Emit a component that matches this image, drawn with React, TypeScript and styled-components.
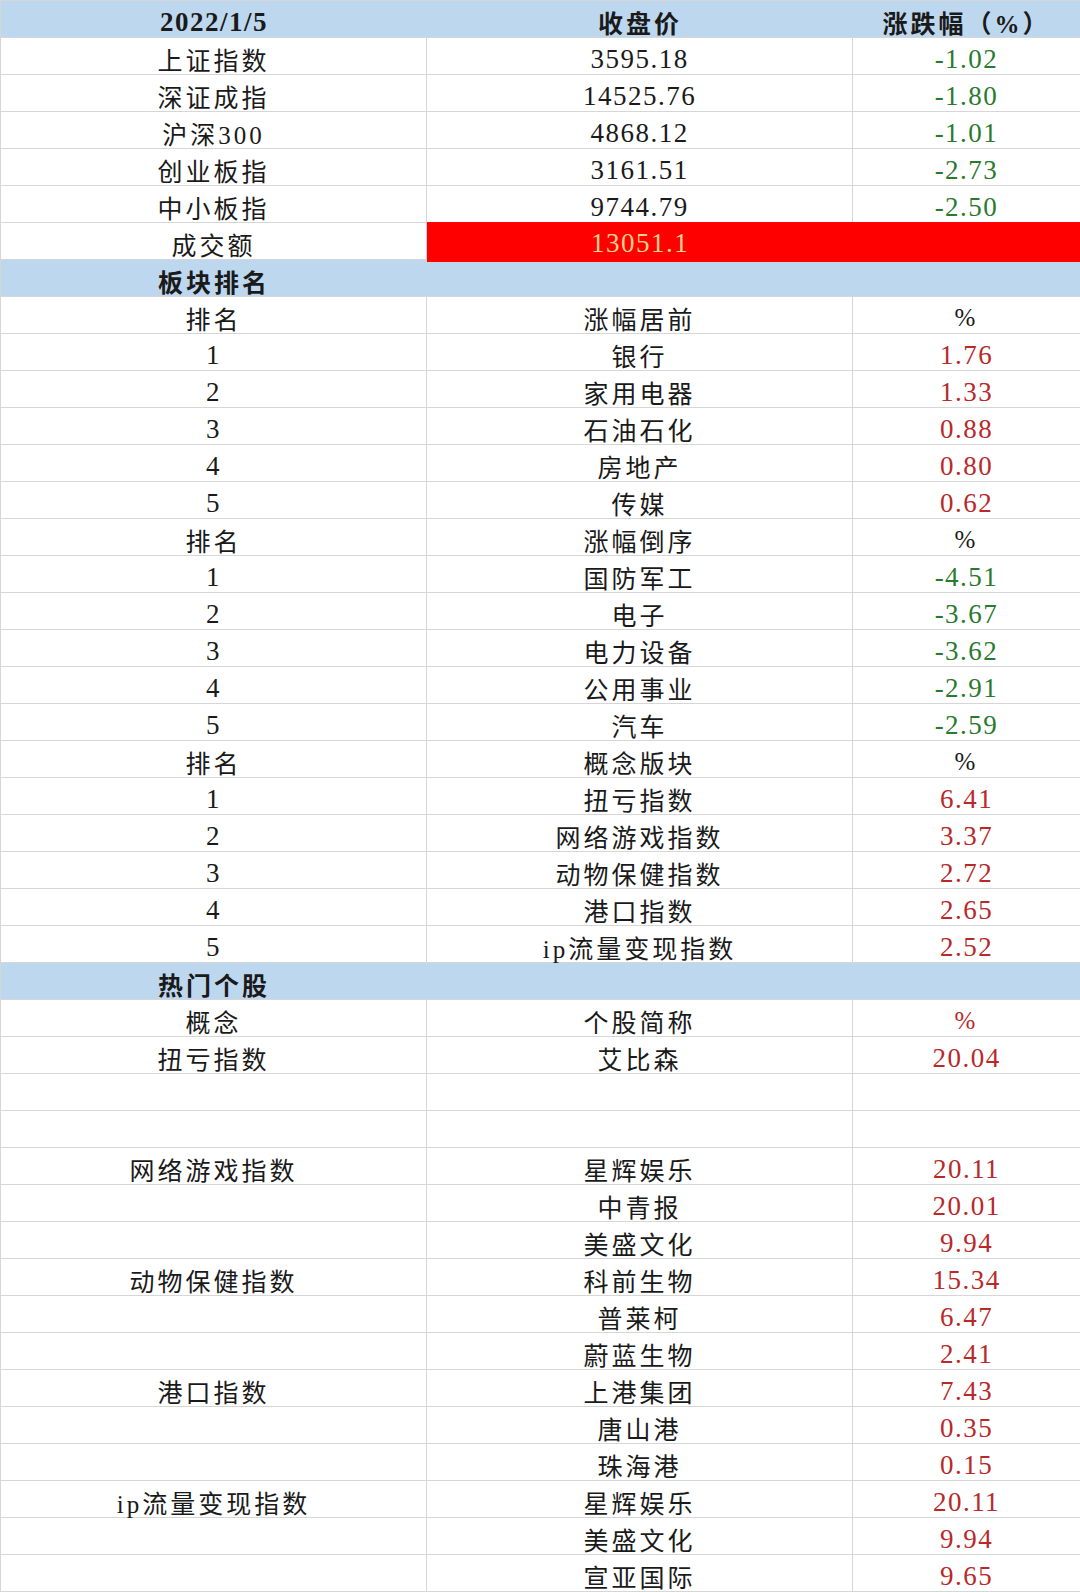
import React from "react";
import styled, { createGlobalStyle, css } from "styled-components";

const GlobalStyle = createGlobalStyle`
  html, body {
    margin: 0;
    padding: 0;
    background: #ffffff;
  }
`;

type Kind = "head" | "section" | "data";
type Tone = "up" | "down" | "plain";

type RowData = {
  kind: Kind;
  cells: [string, string, string];
  tone?: Tone;
  fill?: boolean;
};

const grid = "#d6d6d6";
const blue = "#bdd7ee";

const Sheet = styled.div`
  width: 1080px;
  border-top: 1px solid ${grid};
  border-left: 1px solid ${grid};
  box-sizing: border-box;
  font-family: "Liberation Serif", "Noto Sans CJK SC", serif;
  color: #1a1a1a;
`;

const Row = styled.div<{ $kind: Kind }>`
  display: grid;
  grid-template-columns: 426px 426px 227px;
  height: 37px;
  box-sizing: border-box;
  border-bottom: 1px solid ${grid};
  ${(p) =>
    p.$kind !== "data" &&
    css`
      background: ${blue};
      font-weight: 700;
    `}
`;

const Cell = styled.div<{ $divider: boolean; $tone?: Tone; $fill?: boolean }>`
  display: flex;
  align-items: center;
  justify-content: center;
  padding-top: 3px;
  box-sizing: border-box;
  font-size: 25px;
  letter-spacing: 3px;
  white-space: nowrap;
  border-right: ${(p) => (p.$divider ? `1px solid ${grid}` : "none")};
  color: ${(p) =>
    p.$tone === "up" ? "#b8292a" : p.$tone === "down" ? "#2a7a2e" : "inherit"};
  ${(p) =>
    p.$fill &&
    css`
      background: #ff0000;
      color: #f9cf8f;
    `}
`;

const Num = styled.span`
  font-size: 27px;
  letter-spacing: 1.5px;
`;

const Total = styled.div`
  grid-column: 2 / 4;
  display: grid;
  grid-template-columns: 426px 227px;
  background: #ff0000;
  margin-top: -1px;
`;

const rows: RowData[] = [
  { kind: "head", cells: ["2022/1/5", "收盘价", "涨跌幅（%）"] },
  { kind: "data", cells: ["上证指数", "3595.18", "-1.02"], tone: "down" },
  { kind: "data", cells: ["深证成指", "14525.76", "-1.80"], tone: "down" },
  { kind: "data", cells: ["沪深300", "4868.12", "-1.01"], tone: "down" },
  { kind: "data", cells: ["创业板指", "3161.51", "-2.73"], tone: "down" },
  { kind: "data", cells: ["中小板指", "9744.79", "-2.50"], tone: "down" },
  { kind: "data", cells: ["成交额", "13051.1", ""], fill: true },
  { kind: "section", cells: ["板块排名", "", ""] },
  { kind: "data", cells: ["排名", "涨幅居前", "%"] },
  { kind: "data", cells: ["1", "银行", "1.76"], tone: "up" },
  { kind: "data", cells: ["2", "家用电器", "1.33"], tone: "up" },
  { kind: "data", cells: ["3", "石油石化", "0.88"], tone: "up" },
  { kind: "data", cells: ["4", "房地产", "0.80"], tone: "up" },
  { kind: "data", cells: ["5", "传媒", "0.62"], tone: "up" },
  { kind: "data", cells: ["排名", "涨幅倒序", "%"] },
  { kind: "data", cells: ["1", "国防军工", "-4.51"], tone: "down" },
  { kind: "data", cells: ["2", "电子", "-3.67"], tone: "down" },
  { kind: "data", cells: ["3", "电力设备", "-3.62"], tone: "down" },
  { kind: "data", cells: ["4", "公用事业", "-2.91"], tone: "down" },
  { kind: "data", cells: ["5", "汽车", "-2.59"], tone: "down" },
  { kind: "data", cells: ["排名", "概念版块", "%"] },
  { kind: "data", cells: ["1", "扭亏指数", "6.41"], tone: "up" },
  { kind: "data", cells: ["2", "网络游戏指数", "3.37"], tone: "up" },
  { kind: "data", cells: ["3", "动物保健指数", "2.72"], tone: "up" },
  { kind: "data", cells: ["4", "港口指数", "2.65"], tone: "up" },
  { kind: "data", cells: ["5", "ip流量变现指数", "2.52"], tone: "up" },
  { kind: "section", cells: ["热门个股", "", ""] },
  { kind: "data", cells: ["概念", "个股简称", "%"], tone: "up" },
  { kind: "data", cells: ["扭亏指数", "艾比森", "20.04"], tone: "up" },
  { kind: "data", cells: ["", "", ""] },
  { kind: "data", cells: ["", "", ""] },
  { kind: "data", cells: ["网络游戏指数", "星辉娱乐", "20.11"], tone: "up" },
  { kind: "data", cells: ["", "中青报", "20.01"], tone: "up" },
  { kind: "data", cells: ["", "美盛文化", "9.94"], tone: "up" },
  { kind: "data", cells: ["动物保健指数", "科前生物", "15.34"], tone: "up" },
  { kind: "data", cells: ["", "普莱柯", "6.47"], tone: "up" },
  { kind: "data", cells: ["", "蔚蓝生物", "2.41"], tone: "up" },
  { kind: "data", cells: ["港口指数", "上港集团", "7.43"], tone: "up" },
  { kind: "data", cells: ["", "唐山港", "0.35"], tone: "up" },
  { kind: "data", cells: ["", "珠海港", "0.15"], tone: "up" },
  { kind: "data", cells: ["ip流量变现指数", "星辉娱乐", "20.11"], tone: "up" },
  { kind: "data", cells: ["", "美盛文化", "9.94"], tone: "up" },
  { kind: "data", cells: ["", "宣亚国际", "9.65"], tone: "up" },
];

const isNum = (s: string) => /^[-\d./]+$/.test(s);

const Text = ({ value }: { value: string }) =>
  isNum(value) ? <Num>{value}</Num> : <>{value}</>;

export default function App() {
  return (
    <>
      <GlobalStyle />
      <Sheet>
        {rows.map((r, i) => {
          const lines = r.kind === "data";
          if (r.fill) {
            return (
              <Row key={i} $kind={r.kind}>
                <Cell $divider>
                  <Text value={r.cells[0]} />
                </Cell>
                <Total>
                  <Cell $divider={false} $fill>
                    <Text value={r.cells[1]} />
                  </Cell>
                  <Cell $divider={false} $fill />
                </Total>
              </Row>
            );
          }
          return (
            <Row key={i} $kind={r.kind}>
              <Cell $divider={lines}>
                <Text value={r.cells[0]} />
              </Cell>
              <Cell $divider={lines}>
                <Text value={r.cells[1]} />
              </Cell>
              <Cell $divider={false} $tone={r.tone}>
                <Text value={r.cells[2]} />
              </Cell>
            </Row>
          );
        })}
      </Sheet>
    </>
  );
}
